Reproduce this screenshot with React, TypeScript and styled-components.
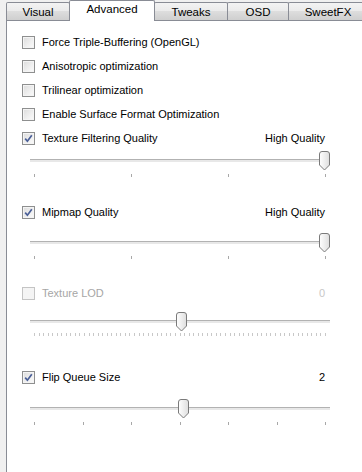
import styled, { createGlobalStyle } from "styled-components";

const GlobalStyle = createGlobalStyle`
  html, body {
    margin: 0;
    padding: 0;
    background: #f0f0f0;
    width: 362px;
    height: 472px;
    overflow: hidden;
  }
  body {
    font-family: "Liberation Sans", Arial, sans-serif;
    font-size: 11px;
    color: #000;
  }
`;

const Window = styled.div`
  display: flex;
  flex-direction: column;
  width: 362px;
  height: 472px;
`;

const TabStrip = styled.div`
  display: flex;
  align-items: flex-end;
  height: 20px;
  padding-left: 7px;
  position: relative;
  z-index: 1;
`;

const Tab = styled.div<{ $w: number; $active?: boolean }>`
  box-sizing: border-box;
  width: ${p => p.$w}px;
  flex: none;
  display: flex;
  align-items: center;
  justify-content: center;
  font-size: 11.5px;
  border: 1px solid #898c95;
  border-bottom: none;
  margin-left: -1px;
  height: ${p => (p.$active ? "21px" : "18px")};
  margin-bottom: ${p => (p.$active ? "-1px" : "0")};
  padding-bottom: ${p => (p.$active ? "4px" : "0")};
  background: ${p =>
    p.$active ? "#fff" : "linear-gradient(#f3f3f3 0%, #ebebeb 45%, #dddddd 50%, #cfcfcf 100%)"};
  border-radius: 2px 2px 0 0;
`;

const Panel = styled.div`
  flex: 1;
  margin-left: 6px;
  background: #fff;
  border-left: 1px solid #898c95;
  border-top: 1px solid #898c95;
  padding: 9px 37px 0 15px;
  display: flex;
  flex-direction: column;
`;

const Row = styled.div<{ $top?: number; $disabled?: boolean }>`
  height: 24px;
  display: flex;
  align-items: center;
  gap: 7px;
  margin-top: ${p => p.$top ?? 0}px;
  color: ${p => (p.$disabled ? "#a6a6a6" : "#000")};
`;

const Label = styled.span`
  flex: 1;
  white-space: nowrap;
`;

const Value = styled.span<{ $disabled?: boolean }>`
  color: ${p => (p.$disabled ? "#c8c8c8" : "#000")};
`;

const Box = styled.div<{ $disabled?: boolean }>`
  box-sizing: border-box;
  width: 13px;
  height: 13px;
  flex: none;
  border: 1px solid ${p => (p.$disabled ? "#c4c4c4" : "#8e8f8f")};
  background: ${p =>
    p.$disabled
      ? "#f4f4f4"
      : "linear-gradient(135deg, #dcdcdc 0%, #f0f0f0 60%, #fbfbfb 100%)"};
  box-shadow: inset 0 0 0 1px #f4f4f4;
  display: flex;
  align-items: center;
  justify-content: center;
`;

const Slider = styled.div<{ $top: number }>`
  position: relative;
  width: 300px;
  height: 26px;
  margin: ${p => p.$top}px 0 0 8px;
`;

const Track = styled.div`
  position: absolute;
  left: 0;
  right: 0;
  top: 8px;
  height: 2px;
  background: #e8e8e8;
  border-top: 1px solid #b2b2b2;
`;

const Thumb = styled.svg`
  position: absolute;
  top: 0;
  width: 11px;
  height: 20px;
`;

const Ticks = styled.div<{ $top: number }>`
  position: absolute;
  left: 4px;
  right: 4px;
  top: ${p => p.$top}px;
  display: flex;
  justify-content: space-between;
`;

const Tick = styled.div<{ $light?: boolean }>`
  width: 1px;
  height: 3px;
  background: ${p => (p.$light ? "#c8c8c8" : "#a8a8a8")};
`;

const Check = ({ checked, disabled }: { checked?: boolean; disabled?: boolean }) => (
  <Box $disabled={disabled}>
    {checked && (
      <svg width="9" height="9" viewBox="0 0 9 9">
        <path d="M1.2 4.6 L3.4 7.2 L7.8 1.2" fill="none" stroke="#4a5f97" strokeWidth="1.7" />
      </svg>
    )}
  </Box>
);

interface SliderProps {
  pos: number;
  ticks: number;
  top: number;
  tickTop?: number;
  light?: boolean;
}

const SliderBar = ({ pos, ticks, top, tickTop = 23, light }: SliderProps) => (
  <Slider $top={top}>
    <Track />
    <Ticks $top={tickTop}>
      {Array.from({ length: ticks }).map((_, i) => (
        <Tick key={i} $light={light} />
      ))}
    </Ticks>
    <Thumb style={{ left: pos - 5 }} viewBox="0 0 11 20">
      <defs>
        <linearGradient id="tg" x1="0" y1="0" x2="1" y2="0">
          <stop offset="0" stopColor="#ffffff" />
          <stop offset="1" stopColor="#dedede" />
        </linearGradient>
      </defs>
      <path
        d="M0.5 3 Q0.5 0.5 3 0.5 H8 Q10.5 0.5 10.5 3 V14 L5.5 19 L0.5 14 Z"
        fill="url(#tg)"
        stroke="#7a7a7a"
      />
    </Thumb>
  </Slider>
);

const tabs = [
  { name: "Visual", w: 64 },
  { name: "Advanced", w: 86, active: true },
  { name: "Tweaks", w: 74 },
  { name: "OSD", w: 62 },
  { name: "SweetFX", w: 80 },
];

export default function App() {
  return (
    <Window>
      <GlobalStyle />
      <TabStrip>
        {tabs.map(t => (
          <Tab key={t.name} $w={t.w} $active={t.active}>
            {t.name}
          </Tab>
        ))}
      </TabStrip>
      <Panel>
        <Row>
          <Check />
          <Label>Force Triple-Buffering (OpenGL)</Label>
        </Row>
        <Row>
          <Check />
          <Label>Anisotropic optimization</Label>
        </Row>
        <Row>
          <Check />
          <Label>Trilinear optimization</Label>
        </Row>
        <Row>
          <Check />
          <Label>Enable Surface Format Optimization</Label>
        </Row>
        <Row>
          <Check checked />
          <Label>Texture Filtering Quality</Label>
          <Value>High Quality</Value>
        </Row>
        <SliderBar pos={294} ticks={4} top={1} />

        <Row $top={23}>
          <Check checked />
          <Label>Mipmap Quality</Label>
          <Value>High Quality</Value>
        </Row>
        <SliderBar pos={294} ticks={4} top={9} />

        <Row $top={22} $disabled>
          <Check disabled />
          <Label>Texture LOD</Label>
          <Value $disabled>0</Value>
        </Row>
        <SliderBar pos={151} ticks={65} top={7} tickTop={21} light />

        <Row $top={27}>
          <Check checked />
          <Label>Flip Queue Size</Label>
          <Value>2</Value>
        </Row>
        <SliderBar pos={153} ticks={7} top={10} />
      </Panel>
    </Window>
  );
}
